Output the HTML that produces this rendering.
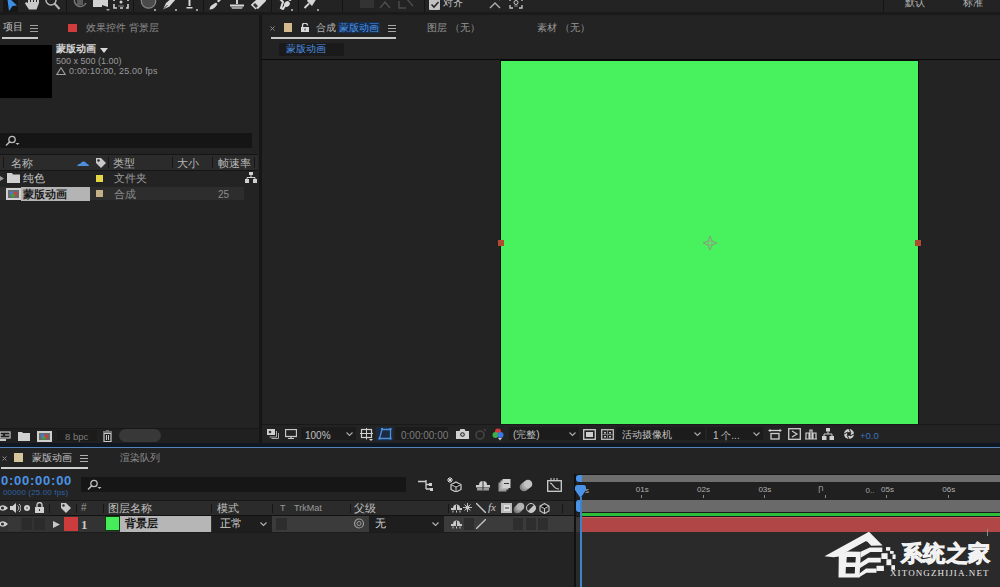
<!DOCTYPE html>
<html><head><meta charset="utf-8">
<style>
*{margin:0;padding:0;box-sizing:border-box}
html,body{width:1000px;height:587px;overflow:hidden;background:#232323;font-family:"Liberation Sans",sans-serif;color:#a8a8a8;font-size:10px}
.a{position:absolute}
.t{position:absolute;white-space:nowrap;line-height:1}
</style></head><body>
<!-- toolbar -->
<div class="a" style="left:0;top:0;width:1000px;height:13px;background:#232323"></div>
<div class="a" style="left:0;top:12px;width:1000px;height:3px;background:#1a1a1a"></div>


<!-- toolbar icons -->
<div class="a" style="left:3px;top:0;width:15px;height:12px;background:#171717"></div>
<svg class="a" style="left:6px;top:0" width="12" height="12"><path d="M1 -4L11 5.5 6.5 6 3 11z" fill="#3d8fe6"/></svg>
<svg class="a" style="left:25px;top:0" width="15" height="11"><path d="M3 -2v5L1 2 0 3.5 4 9.5h7.5L14 3V-2h-2v4h-1V-3H9v5H8V-3H6v5H5V-2z" fill="#c9c9c9"/></svg>
<svg class="a" style="left:45px;top:0" width="16" height="12"><circle cx="6" cy="0" r="5" fill="none" stroke="#b8b8b8" stroke-width="1.5"/><path d="M9.5 3.5L14.5 9" stroke="#b8b8b8" stroke-width="2"/></svg>
<div class="a" style="left:66px;top:0;width:1px;height:12px;background:#141414"></div>
<svg class="a" style="left:73px;top:0" width="15" height="10"><path d="M2 -2A6 6 0 0 0 13 3" fill="none" stroke="#777" stroke-width="1.5"/><rect x="4" y="0" width="6" height="5" fill="#5a5a5a"/></svg>
<svg class="a" style="left:92px;top:0" width="18" height="12"><rect x="1" y="-2" width="9" height="9" fill="#d2d2d2"/><path d="M10 0l6 -2v9l-6 -2z" fill="#d2d2d2"/><path d="M14 9h4l-2 2z" fill="#aaa"/></svg>
<svg class="a" style="left:113px;top:0" width="16" height="10"><path d="M1 -1v2M1 4v4h3M7 8h3M13 8h2V4M15 1v-2" stroke="#d0d0d0" stroke-width="1.6" fill="none"/><circle cx="8" cy="2" r="1.5" fill="#d0d0d0"/><path d="M5 6h6" stroke="#888"/></svg>
<div class="a" style="left:133px;top:0;width:1px;height:12px;background:#141414"></div>
<svg class="a" style="left:140px;top:0" width="17" height="12"><circle cx="8.5" cy="1" r="7.2" fill="#4a4a4a" stroke="#8a8a8a" stroke-width="1.2"/></svg>
<div class="a" style="left:154px;top:9px;width:2px;height:2px;background:#999"></div>
<svg class="a" style="left:162px;top:0" width="14" height="10"><path d="M14 -3L11 -3 4 3 1 9.5 7.5 6.5 13 0z" fill="#d6d6d6"/><path d="M1 9.5L5.5 5" stroke="#333" stroke-width="1"/><circle cx="11" cy="0" r="1.6" fill="#d6d6d6"/></svg>
<div class="a" style="left:175px;top:9px;width:2px;height:2px;background:#999"></div>
<svg class="a" style="left:185px;top:0" width="9" height="10"><path d="M3.5 -2h2v8h-2z" fill="#d6d6d6"/><path d="M1.5 7h6v1.5h-6z" fill="#d6d6d6"/></svg>
<div class="a" style="left:196px;top:9px;width:2px;height:2px;background:#999"></div>
<div class="a" style="left:203px;top:0;width:1px;height:12px;background:#141414"></div>
<svg class="a" style="left:209px;top:0" width="13" height="10"><path d="M12 -3L8 1l1.5 1.5L13 -1z" fill="#d6d6d6"/><path d="M7 2.5L3 5C1 6 1 8 0.5 9.5 3 9.5 6 8.5 8.5 4z" fill="#d6d6d6"/></svg>
<svg class="a" style="left:229px;top:0" width="16" height="10"><path d="M7 -2h2v6H7z" fill="#d0d0d0"/><path d="M1 4.5h14v2H1z" fill="#d8d8d8"/><path d="M2 6.5h12L13 9H3z" fill="#999"/></svg>
<svg class="a" style="left:250px;top:0" width="17" height="11"><path d="M1 5L8 -2 16 -2 16 1 8 9z" fill="#d8d8d8"/><path d="M1 5l3.5 -3.5 4.5 4.5L5.5 9.5z" fill="#d8d8d8"/><path d="M3 5l2 -2 3 3 -2 2z" fill="#333"/></svg>
<div class="a" style="left:271px;top:0;width:1px;height:12px;background:#141414"></div>
<svg class="a" style="left:277px;top:0" width="15" height="10"><path d="M2 -2l4 4 -2 6 2 1 3 -5" stroke="#dadada" stroke-width="2" fill="none"/><ellipse cx="10" cy="4" rx="3" ry="2.5" fill="#dadada" transform="rotate(-40 10 4)"/><circle cx="13" cy="-0.5" r="1.5" fill="#dadada"/></svg>
<div class="a" style="left:291px;top:9px;width:2px;height:2px;background:#999"></div>
<div class="a" style="left:298px;top:0;width:1px;height:12px;background:#141414"></div>
<svg class="a" style="left:303px;top:0" width="15" height="10"><path d="M6 -2L14 -2 9 6 4 1z" fill="#d6d6d6"/><path d="M6 3.5L1.5 8" stroke="#d6d6d6" stroke-width="1.8"/></svg>
<div class="a" style="left:317px;top:9px;width:2px;height:2px;background:#999"></div>
<div class="a" style="left:342px;top:0;width:1px;height:12px;background:#141414"></div>
<div class="a" style="left:360px;top:0;width:14px;height:8px;background:#333"></div>
<svg class="a" style="left:379px;top:0" width="36" height="10"><path d="M1 8l5 -6 5 6M20 1v7h7M27 -2l7 8" stroke="#4a4a4a" stroke-width="1.5" fill="none"/></svg>
<div class="a" style="left:424px;top:0;width:1px;height:12px;background:#141414"></div>
<div class="a" style="left:429px;top:-1px;width:11px;height:11px;background:#c2c2c2;border-radius:1px"></div>
<svg class="a" style="left:429px;top:0" width="11" height="10"><path d="M2.5 4.5l2.5 2.5 4.5 -5" stroke="#262626" stroke-width="1.6" fill="none"/></svg>
<div class="t" style="left:443px;top:-2px;font-size:10px;color:#c4c4c4">对齐</div>
<svg class="a" style="left:489px;top:0" width="12" height="10"><path d="M1 8l5 -5 5 5" stroke="#b0b0b0" stroke-width="1.4" fill="none"/><path d="M9 -1l2 1" stroke="#aaa"/></svg>
<svg class="a" style="left:509px;top:0" width="14" height="10"><path d="M1 -1v2M1 5v3h3M10 8h3V5M13 1v-2" stroke="#c8c8c8" stroke-width="1.3" fill="none"/><circle cx="7" cy="2.5" r="2" fill="none" stroke="#c8c8c8"/><path d="M5 6h4" stroke="#888"/></svg>
<div class="a" style="left:883px;top:0;width:1px;height:12px;background:#141414"></div>
<div class="t" style="left:905px;top:-2px;font-size:10px;color:#b4b4b4">默认</div>
<div class="t" style="left:963px;top:-2px;font-size:10px;color:#b4b4b4">标准</div>

<!-- project panel -->
<div class="a" style="left:0;top:15px;width:259px;height:428px;background:#232323"></div>
<div class="a" style="left:259px;top:15px;width:3px;height:432px;background:#161616"></div>
<div class="a" style="left:2px;top:37px;width:36px;height:2px;background:#c8c8c8"></div>
<div class="a" style="left:0;top:45px;width:52px;height:53px;background:#000"></div>
<div class="a" style="left:0;top:133px;width:252px;height:15px;background:#151515"></div>
<div class="a" style="left:0;top:154px;width:258px;height:1px;background:#151515"></div>
<div class="a" style="left:0;top:155px;width:258px;height:15px;background:#2b2b2b"></div>
<div class="a" style="left:0;top:170px;width:258px;height:1px;background:#151515"></div>
<div class="a" style="left:0;top:187px;width:244px;height:13px;background:#2d2d2d"></div>
<div class="a" style="left:21px;top:187px;width:69px;height:14px;background:#b4b4b4"></div>
<div class="a" style="left:0;top:428px;width:259px;height:1px;background:#181818"></div>
<div class="a" style="left:0;top:429px;width:259px;height:14px;background:#202020"></div>


<!-- project content -->
<div class="t" style="left:3px;top:22px;font-size:10px;color:#c4c4c4">项目</div>
<svg class="a" style="left:30px;top:25px" width="9" height="8"><path d="M0 .5h8M0 3.5h8M0 6.5h8" stroke="#a0a0a0" stroke-width="1"/></svg>
<div class="a" style="left:68px;top:24px;width:9px;height:8px;background:#d03c3c"></div>
<div class="t" style="left:86px;top:23px;font-size:10px;color:#8c8c8c">效果控件 背景层</div>
<div class="t" style="left:56px;top:44px;font-size:10px;font-weight:bold;color:#d4d4d4">蒙版动画</div><svg class="a" style="left:100px;top:48px" width="8" height="5"><path d="M0 0h8L4 5z" fill="#d8d8d8"/></svg>
<div class="t" style="left:56px;top:57px;font-size:9px;color:#9a9a9a">500 x 500 (1.00)</div>
<svg class="a" style="left:56px;top:67px" width="10" height="8"><path d="M5 .8L9.2 7.5H.8z" fill="none" stroke="#a0a0a0" stroke-width="1.1"/></svg><div class="t" style="left:69px;top:67px;font-size:9px;letter-spacing:0.2px;color:#9a9a9a">0:00:10:00, 25.00 fps</div>
<svg class="a" style="left:4px;top:135px" width="16" height="12"><circle cx="8" cy="4.5" r="3.2" fill="none" stroke="#bdbdbd" stroke-width="1.3"/><path d="M5.8 6.8L2 10.5" stroke="#bdbdbd" stroke-width="1.5"/><path d="M11.5 8h4l-2 2z" fill="#bdbdbd"/></svg>
<div class="a" style="left:3px;top:157px;width:1px;height:11px;background:#161616"></div>
<div class="t" style="left:11px;top:158px;font-size:10.5px;color:#b8b8b8">名称</div>
<svg class="a" style="left:77px;top:161px" width="12" height="5"><path d="M0 5Q1 2.5 3.5 2.5Q5 0 7 0.5Q9 1 9.5 2.5Q12 3 12 5z" fill="#4c8fdc"/></svg>
<svg class="a" style="left:95px;top:157px" width="12" height="12"><path d="M1 1h5l5 5-5 5-5-5z" fill="#c8c8c8"/><circle cx="3.5" cy="3.5" r="1.2" fill="#2b2b2b"/></svg>
<div class="a" style="left:108px;top:157px;width:1px;height:11px;background:#161616"></div>
<div class="t" style="left:113px;top:158px;font-size:10.5px;color:#b8b8b8">类型</div>
<div class="a" style="left:172px;top:157px;width:1px;height:11px;background:#161616"></div>
<div class="t" style="left:177px;top:158px;font-size:10.5px;color:#b8b8b8">大小</div>
<div class="a" style="left:212px;top:157px;width:1px;height:11px;background:#161616"></div>
<div class="t" style="left:218px;top:158px;font-size:10.5px;color:#b8b8b8">帧速率</div>
<div class="a" style="left:254px;top:157px;width:1px;height:11px;background:#161616"></div>
<svg class="a" style="left:0;top:176px" width="4" height="5"><path d="M0 0L4 2.5 0 5z" fill="#9a9a9a"/></svg>
<svg class="a" style="left:7px;top:173px" width="13" height="11"><path d="M0 0h5l1 1.5h7V10H0z" fill="#cfcfcf"/></svg>
<div class="t" style="left:23px;top:173px;font-size:10.5px;color:#c4c4c4">纯色</div>
<div class="a" style="left:96px;top:175px;width:7px;height:7px;background:#e4d646"></div>
<div class="t" style="left:114px;top:173px;font-size:10.5px;color:#9a9a9a">文件夹</div>
<svg class="a" style="left:245px;top:172px" width="12" height="11"><rect x="4" y="0" width="4" height="3" fill="#d0d0d0"/><path d="M6 3v2.5M2 8V5.5h8V8" stroke="#d0d0d0" fill="none"/><rect x="0" y="7" width="4" height="4" fill="#d0d0d0"/><rect x="8" y="7" width="4" height="4" fill="#d0d0d0"/></svg>
<svg class="a" style="left:6px;top:188px" width="15" height="12"><rect x="0" y="0" width="15" height="12" fill="#cfcfcf"/><rect x="2" y="2" width="11" height="8" fill="#6a6a6a"/><circle cx="6" cy="5.5" r="2.3" fill="#3f7fd0"/><circle cx="9" cy="6" r="2.3" fill="#c84040"/><circle cx="7" cy="7.5" r="2" fill="#40a040"/></svg>
<div class="t" style="left:23px;top:189px;font-size:10.5px;font-weight:bold;color:#1a1a1a">蒙版动画</div>
<div class="a" style="left:96px;top:190px;width:7px;height:7px;background:#c4b086"></div>
<div class="t" style="left:114px;top:189px;font-size:10.5px;color:#8c8c8c">合成</div>
<div class="t" style="left:218px;top:190px;font-size:10px;color:#8c8c8c">25</div>
<!-- project bottom toolbar -->
<svg class="a" style="left:0;top:431px" width="11" height="11"><rect x="0" y="1" width="10" height="6" fill="none" stroke="#c8c8c8" stroke-width="1.2"/><path d="M0 4h3M5 4h4" stroke="#c8c8c8"/><rect x="0" y="8" width="6" height="2" fill="#c8c8c8"/></svg>
<svg class="a" style="left:18px;top:432px" width="12" height="9"><path d="M0 0h4l1 1h7v8H0z" fill="#d0d0d0"/></svg>
<svg class="a" style="left:37px;top:431px" width="15" height="11"><rect x="0" y="0" width="15" height="11" fill="#cfcfcf"/><rect x="2" y="2" width="11" height="7" fill="#6a6a6a"/><circle cx="6" cy="5" r="2.2" fill="#3f7fd0"/><circle cx="9" cy="5.5" r="2.2" fill="#c84040"/><circle cx="7" cy="7" r="1.8" fill="#40a040"/></svg>
<div class="a" style="left:57px;top:430px;width:40px;height:11px;background:#1b1b1b"></div>
<div class="t" style="left:65px;top:432px;font-size:9.5px;color:#7e7e7e">8 bpc</div>
<svg class="a" style="left:103px;top:430px" width="9" height="12"><path d="M0 2h9M3 0h3" stroke="#c8c8c8" stroke-width="1.2"/><path d="M1 3.5h7v8H1z" fill="none" stroke="#c8c8c8" stroke-width="1.2"/><path d="M3.5 5v5M5.5 5v5" stroke="#c8c8c8"/></svg>
<div class="a" style="left:119px;top:429px;width:42px;height:13px;background:#383838;border-radius:7px"></div>

<!-- comp panel -->
<div class="a" style="left:262px;top:59px;width:738px;height:1px;background:#0a0a0a"></div>
<div class="a" style="left:279px;top:43px;width:65px;height:13px;background:#1a1a1a"></div>
<div class="a" style="left:271px;top:37px;width:125px;height:2px;background:#c8c8c8"></div>
<div class="a" style="left:500px;top:60px;width:419px;height:365px;background:#0a0a0a"></div>
<div class="a" style="left:501px;top:61px;width:417px;height:363px;background:#47f25e"></div>
<div class="a" style="left:262px;top:425px;width:738px;height:18px;background:#232323"></div>


<!-- comp tabs -->
<svg class="a" style="left:270px;top:26px" width="5" height="5"><path d="M.5 .5l4 4M4.5 .5l-4 4" stroke="#8a8a8a" stroke-width="1"/></svg>
<div class="a" style="left:284px;top:23px;width:8px;height:9px;background:#d4b88e"></div>
<svg class="a" style="left:301px;top:23px" width="8" height="9"><path d="M1.5 4V2.5a2.5 2.5 0 0 1 5 0" fill="none" stroke="#d8d8d8" stroke-width="1.3"/><rect x="0" y="4" width="8" height="5" fill="#d8d8d8"/><rect x="3.5" y="5.5" width="1" height="2" fill="#333"/></svg>
<div class="t" style="left:316px;top:23px;font-size:10px;color:#b4b4b4">合成</div>
<div class="a" style="left:338px;top:22px;width:42px;height:11px;background:#162c4a"></div>
<div class="t" style="left:339px;top:23px;font-size:10px;color:#4d95e8">蒙版动画</div>
<svg class="a" style="left:388px;top:25px" width="9" height="8"><path d="M0 .5h8M0 3.5h8M0 6.5h8" stroke="#a8a8a8" stroke-width="1"/></svg>
<div class="t" style="left:427px;top:23px;font-size:10px;color:#9a9a9a">图层 （无）</div>
<div class="t" style="left:537px;top:23px;font-size:10px;color:#9a9a9a">素材 （无）</div>
<div class="t" style="left:286px;top:44px;font-size:10px;color:#4a90e2">蒙版动画</div>
<!-- viewer -->
<div class="a" style="left:498px;top:240px;width:6px;height:6px;background:#b04a30"></div>
<div class="a" style="left:915px;top:240px;width:6px;height:6px;background:#b04a30"></div>
<svg class="a" style="left:702px;top:235px" width="16" height="16"><path d="M8 1L10 6 15 8 10 10 8 15 6 10 1 8 6 6z" fill="none" stroke="#8a9a78" stroke-width="1"/><circle cx="8" cy="8" r="2.2" fill="none" stroke="#9aa088" stroke-width="1"/></svg>
<!-- comp toolbar -->
<div class="a" style="left:262px;top:424px;width:738px;height:1px;background:#191919"></div>
<div class="a" style="left:301px;top:427px;width:55px;height:13px;background:#1c1c1c"></div>
<div class="a" style="left:395px;top:427px;width:53px;height:13px;background:#1c1c1c"></div>
<div class="a" style="left:509px;top:427px;width:70px;height:13px;background:#1c1c1c"></div>
<div class="a" style="left:616px;top:427px;width:89px;height:13px;background:#1c1c1c"></div>
<div class="a" style="left:707px;top:427px;width:56px;height:13px;background:#1c1c1c"></div>

<svg class="a" style="left:267px;top:429px" width="12" height="10"><rect x="0" y="0" width="8" height="6" fill="#cfcfcf"/><path d="M9.5 2v6h-7M11.5 4v5.5h-7" stroke="#a8a8a8" fill="none"/><circle cx="3" cy="3" r="1.3" fill="#333"/></svg>
<svg class="a" style="left:285px;top:429px" width="12" height="10"><rect x="0.5" y="0.5" width="11" height="7" fill="none" stroke="#c8c8c8" stroke-width="1.3"/><path d="M6 8v1.5M3 9.5h6" stroke="#c8c8c8" stroke-width="1.2"/></svg>
<div class="t" style="left:305px;top:431px;font-size:10px;color:#c0c0c0">100%</div>
<svg class="a" style="left:346px;top:432px" width="7" height="5"><path d="M.5 .5l3 3 3-3" stroke="#a8a8a8" stroke-width="1.2" fill="none"/></svg>
<svg class="a" style="left:360px;top:428px" width="14" height="13"><rect x="1.5" y="1.5" width="10" height="8" fill="none" stroke="#cfcfcf" stroke-width="1.2"/><path d="M6.5 0v11.5M0 5.5h13" stroke="#cfcfcf" stroke-width="1"/><path d="M9 11h4l-2 2z" fill="#cfcfcf"/></svg>
<div class="a" style="left:376px;top:427px;width:17px;height:14px;background:#1b2c42"></div>
<svg class="a" style="left:378px;top:428px" width="14" height="12"><path d="M4 1.5h8.5v9H1.5z" fill="none" stroke="#4a8ee0" stroke-width="1.3"/><rect x="3" y="0" width="2" height="2" fill="#4a8ee0"/><rect x="11.5" y="0" width="2" height="2" fill="#4a8ee0"/><rect x="0.5" y="9.5" width="2" height="2" fill="#4a8ee0"/><rect x="11.5" y="9.5" width="2" height="2" fill="#4a8ee0"/></svg>
<div class="t" style="left:401px;top:431px;font-size:10px;color:#7e7e7e">0:00:00:00</div>
<svg class="a" style="left:456px;top:429px" width="13" height="10"><path d="M0 2h3.5l1-2h4l1 2H13v8H0z" fill="#d0d0d0"/><circle cx="6.5" cy="5.5" r="2.3" fill="#2a2a2a"/><circle cx="6.5" cy="5.5" r="1.2" fill="#d0d0d0"/></svg>
<svg class="a" style="left:474px;top:429px" width="12" height="11"><circle cx="6" cy="6" r="4" fill="none" stroke="#444" stroke-width="1.6"/><path d="M10 0l2 2" stroke="#444" stroke-width="1.4"/></svg>
<svg class="a" style="left:492px;top:428px" width="12" height="13"><circle cx="6" cy="3.5" r="3" fill="#d63a3a"/><circle cx="3.5" cy="7" r="3" fill="#3bb04a"/><circle cx="8.5" cy="7" r="3" fill="#3a7ae0"/><path d="M6 10h4l-2 2.5z" fill="#d0d0d0"/></svg>
<div class="t" style="left:513px;top:430px;font-size:10px;color:#c0c0c0">(完整)</div>
<svg class="a" style="left:569px;top:432px" width="7" height="5"><path d="M.5 .5l3 3 3-3" stroke="#a8a8a8" stroke-width="1.2" fill="none"/></svg>
<svg class="a" style="left:583px;top:429px" width="13" height="11"><rect x="0.7" y="0.7" width="11.6" height="9.6" fill="none" stroke="#cfcfcf" stroke-width="1.3"/><rect x="3" y="3" width="7" height="5" fill="#cfcfcf"/></svg>
<svg class="a" style="left:601px;top:429px" width="13" height="11"><rect x="0.7" y="0.7" width="11.6" height="9.6" fill="none" stroke="#bfbfbf" stroke-width="1.3"/><path d="M6.5 1v9M1 5.5h11" stroke="#777"/><rect x="3" y="3" width="2" height="1.5" fill="#bfbfbf"/><rect x="8" y="3" width="2" height="1.5" fill="#bfbfbf"/><rect x="3" y="7" width="2" height="1.5" fill="#bfbfbf"/><rect x="8" y="7" width="2" height="1.5" fill="#bfbfbf"/></svg>
<div class="t" style="left:622px;top:430px;font-size:10px;color:#c0c0c0">活动摄像机</div>
<svg class="a" style="left:694px;top:432px" width="7" height="5"><path d="M.5 .5l3 3 3-3" stroke="#a8a8a8" stroke-width="1.2" fill="none"/></svg>
<div class="t" style="left:713px;top:431px;font-size:10px;color:#c0c0c0">1 个...</div>
<svg class="a" style="left:753px;top:432px" width="7" height="5"><path d="M.5 .5l3 3 3-3" stroke="#a8a8a8" stroke-width="1.2" fill="none"/></svg>
<svg class="a" style="left:768px;top:429px" width="14" height="11"><path d="M1 1.5h12" stroke="#cfcfcf" stroke-width="1.3"/><path d="M0 1.5l2.5-1.5v3zM14 1.5l-2.5-1.5v3z" fill="#cfcfcf"/><rect x="3" y="4.5" width="8" height="5.5" fill="none" stroke="#cfcfcf" stroke-width="1.3"/></svg>
<svg class="a" style="left:788px;top:428px" width="13" height="12"><rect x="0.7" y="0.7" width="11.6" height="10.6" fill="none" stroke="#cfcfcf" stroke-width="1.3"/><path d="M4 3l5 3-5 3" stroke="#cfcfcf" stroke-width="1.2" fill="none"/></svg>
<svg class="a" style="left:805px;top:428px" width="12" height="12"><path d="M0 11h12M1 11V5h3v6M5 11V2h2v9M8 11V5h3v6" stroke="#cfcfcf" stroke-width="1.2" fill="none"/></svg>
<svg class="a" style="left:822px;top:428px" width="12" height="12"><rect x="4" y="0" width="4" height="3.5" fill="#d0d0d0"/><path d="M6 3.5v2.5M2 8V6h8v2" stroke="#d0d0d0" fill="none"/><rect x="0" y="8" width="4.5" height="4" fill="#d0d0d0"/><rect x="7.5" y="8" width="4.5" height="4" fill="#d0d0d0"/></svg>
<svg class="a" style="left:843px;top:428px" width="12" height="12"><circle cx="6" cy="6" r="5" fill="#cfcfcf"/><circle cx="6" cy="6" r="2" fill="#232323"/><path d="M6 1l2 4M11 6l-4 2M6 11l-2-4M1 6l4-2" stroke="#232323" stroke-width="1"/></svg>
<div class="t" style="left:860px;top:431px;font-size:9.5px;color:#3a74bc">+0.0</div>

<!-- separator band -->
<div class="a" style="left:0;top:443px;width:1000px;height:4px;background:#0f1822"></div>
<div class="a" style="left:0;top:447px;width:1000px;height:1px;background:#5584b8"></div>

<!-- timeline -->
<svg class="a" style="left:2px;top:456px" width="5" height="5"><path d="M.5 .5l4 4M4.5 .5l-4 4" stroke="#8a8a8a" stroke-width="1"/></svg>
<div class="a" style="left:14px;top:453px;width:9px;height:9px;background:#d6c49a"></div>
<div class="t" style="left:32px;top:453px;font-size:10px;color:#c4c4c4">蒙版动画</div>
<svg class="a" style="left:80px;top:455px" width="9" height="8"><path d="M0 .5h8M0 3.5h8M0 6.5h8" stroke="#b0b0b0" stroke-width="1"/></svg>
<div class="a" style="left:1px;top:467px;width:87px;height:2px;background:#cfcfcf"></div>
<div class="t" style="left:120px;top:453px;font-size:10px;color:#8e8e8e">渲染队列</div>
<div class="t" style="left:1px;top:474px;font-size:13px;font-weight:bold;letter-spacing:0.75px;color:#4b93e6">0:00:00:00</div>
<div class="t" style="left:3px;top:489px;font-size:8px;letter-spacing:0.15px;color:#2f62a6">00000 (25.00 fps)</div>
<div class="a" style="left:81px;top:477px;width:325px;height:15px;background:#161616"></div>
<svg class="a" style="left:86px;top:479px" width="16" height="12"><circle cx="8" cy="4.5" r="3.2" fill="none" stroke="#bdbdbd" stroke-width="1.3"/><path d="M5.8 6.8L2 10.5" stroke="#bdbdbd" stroke-width="1.5"/><path d="M11.5 8h4l-2 2z" fill="#bdbdbd"/></svg>
<svg class="a" style="left:418px;top:480px" width="16" height="11"><path d="M0 1.5h6M6 1.5h2M8 0v9M8 4.5h4M8 9h4" stroke="#cfcfcf" stroke-width="1.3" fill="none"/><rect x="11" y="3" width="3" height="3" fill="#cfcfcf"/><rect x="12" y="8" width="3" height="3" fill="#cfcfcf"/></svg>
<svg class="a" style="left:447px;top:477px" width="15" height="15"><path d="M3 0v6M0 3h6M1 1l4 4M5 1l-4 4" stroke="#e0e0e0" stroke-width="1"/><path d="M9 5l5 2.5v5L9 15 4 12.5v-5z" fill="none" stroke="#cfcfcf" stroke-width="1.2"/><path d="M4 7.5l5 2.5 5-2.5M9 10v5" stroke="#cfcfcf" stroke-width="1"/></svg>
<svg class="a" style="left:476px;top:480px" width="14" height="11"><path d="M3 5a4 4 0 0 1 8 0z" fill="#cfcfcf"/><rect x="0" y="5" width="14" height="2.5" fill="#cfcfcf"/><rect x="1" y="8" width="12" height="2.5" fill="#9a9a9a"/><path d="M7 1v9" stroke="#333"/></svg>
<svg class="a" style="left:498px;top:479px" width="13" height="13"><rect x="0.5" y="3.5" width="8" height="9" fill="#9a9a9a"/><rect x="2.5" y="1.5" width="8" height="9" fill="#b8b8b8"/><rect x="4.5" y="0" width="8" height="9" fill="#d0d0d0"/><path d="M6 4.5h5" stroke="#333"/></svg>
<svg class="a" style="left:519px;top:479px" width="14" height="13"><circle cx="5" cy="8" r="4.3" fill="#8a8a8a"/><circle cx="7" cy="6.5" r="4.3" fill="#a8a8a8"/><circle cx="9" cy="5" r="4.3" fill="#c4c4c4"/></svg>
<svg class="a" style="left:547px;top:478px" width="15" height="14"><rect x="0.7" y="2.7" width="13.6" height="10.6" fill="none" stroke="#cfcfcf" stroke-width="1.3"/><path d="M3 5c3 0 3 6 9 6" stroke="#cfcfcf" stroke-width="1.2" fill="none"/><path d="M4 0v2M7 0v2M10 0v2" stroke="#cfcfcf"/></svg>
<!-- header row -->
<div class="a" style="left:0;top:500px;width:574px;height:1px;background:#181818"></div>
<div class="a" style="left:0;top:501px;width:574px;height:14px;background:#2b2b2b"></div>
<div class="a" style="left:0;top:515px;width:574px;height:1px;background:#121212"></div>
<svg class="a" style="left:0;top:504px" width="8" height="8"><path d="M-2 4Q3 -1.5 8 4Q3 9.5 -2 4z" fill="#d0d0d0"/><circle cx="2.5" cy="4" r="1.6" fill="#2b2b2b"/></svg>
<svg class="a" style="left:10px;top:503px" width="11" height="10"><path d="M0 3h2.5L6 0v10L2.5 7H0z" fill="#d0d0d0"/><path d="M7.5 2.5a3 3 0 0 1 0 5M9 1a5 5 0 0 1 0 8" stroke="#c8c8c8" fill="none"/></svg>
<div class="a" style="left:24px;top:505px;width:6px;height:6px;border-radius:3px;background:#d0d0d0"></div><div class="a" style="left:26px;top:507px;width:2px;height:2px;background:#888"></div>
<svg class="a" style="left:35px;top:502px" width="9" height="11"><path d="M2 5V3a2.5 2.5 0 0 1 5 0v2" fill="none" stroke="#d0d0d0" stroke-width="1.3"/><rect x="0" y="5" width="9" height="6" fill="#d0d0d0"/><rect x="4" y="7" width="1" height="2" fill="#333"/></svg>
<div class="a" style="left:49px;top:504px;width:1px;height:9px;background:#161616"></div>
<svg class="a" style="left:60px;top:502px" width="12" height="12"><path d="M1 1h5l5 5-5 5-5-5z" fill="#c8c8c8"/><circle cx="3.5" cy="3.5" r="1.2" fill="#2b2b2b"/></svg>
<div class="a" style="left:76px;top:504px;width:1px;height:9px;background:#161616"></div>
<div class="t" style="left:81px;top:503px;font-size:10px;color:#9a9a9a">#</div>
<div class="a" style="left:103px;top:504px;width:1px;height:9px;background:#161616"></div>
<div class="t" style="left:108px;top:503px;font-size:10.5px;color:#c0c0c0">图层名称</div>
<div class="a" style="left:211px;top:504px;width:1px;height:9px;background:#161616"></div>
<div class="t" style="left:217px;top:503px;font-size:10.5px;color:#c0c0c0">模式</div>
<div class="a" style="left:272px;top:504px;width:1px;height:9px;background:#161616"></div>
<div class="t" style="left:280px;top:504px;font-size:9px;color:#9a9a9a">T</div>
<div class="t" style="left:294px;top:504px;font-size:9px;color:#9a9a9a">TrkMat</div>
<div class="a" style="left:350px;top:504px;width:1px;height:9px;background:#161616"></div>
<div class="t" style="left:354px;top:503px;font-size:10.5px;color:#c0c0c0">父级</div>
<div class="a" style="left:448px;top:504px;width:1px;height:9px;background:#161616"></div>
<svg class="a" style="left:451px;top:503px" width="11" height="10"><path d="M2 5a3.5 3.5 0 0 1 7 0z" fill="#c8c8c8"/><rect x="0" y="5" width="11" height="2" fill="#c8c8c8"/><path d="M2 7.5v2M5.5 7.5v2M9 7.5v2" stroke="#c8c8c8"/><path d="M5.5 2v5" stroke="#2b2b2b"/></svg>
<svg class="a" style="left:463px;top:503px" width="9" height="9"><circle cx="4.5" cy="4.5" r="2" fill="#c8c8c8"/><path d="M4.5 0v9M0 4.5h9M1.5 1.5l6 6M7.5 1.5l-6 6" stroke="#c8c8c8" stroke-width=".9"/></svg>
<svg class="a" style="left:476px;top:503px" width="10" height="10"><path d="M0 0l10 10" stroke="#c8c8c8" stroke-width="1.4"/></svg>
<div class="t" style="left:488px;top:502px;font-size:11px;font-style:italic;font-family:'Liberation Serif',serif;color:#c8c8c8">fx</div>
<svg class="a" style="left:501px;top:503px" width="11" height="10"><rect x="0" y="0" width="11" height="10" fill="#bdbdbd"/><rect x="3" y="2" width="6" height="6" fill="#ddd"/><path d="M4 5h4" stroke="#333"/></svg>
<svg class="a" style="left:513px;top:502px" width="12" height="12"><circle cx="4.5" cy="7.5" r="3.8" fill="#7a7a7a"/><circle cx="6" cy="6" r="3.8" fill="#9a9a9a"/><circle cx="7.5" cy="4.5" r="3.8" fill="#b4b4b4"/></svg>
<svg class="a" style="left:526px;top:503px" width="10" height="10"><circle cx="5" cy="5" r="4.5" fill="#c8c8c8"/><path d="M1.8 8.2A4.5 4.5 0 0 1 8.2 1.8z" fill="#2b2b2b"/><circle cx="5" cy="5" r="4.5" fill="none" stroke="#c8c8c8"/></svg>
<svg class="a" style="left:539px;top:503px" width="11" height="11"><path d="M5.5 .5l4.5 2.5v5l-4.5 2.5L1 8V3z" fill="none" stroke="#c8c8c8" stroke-width="1.1"/><path d="M1 3l4.5 2.5L10 3M5.5 5.5v5" stroke="#c8c8c8"/></svg>
<div class="a" style="left:562px;top:504px;width:1px;height:9px;background:#161616"></div>
<!-- layer row -->
<div class="a" style="left:0;top:516px;width:574px;height:16px;background:#333"></div>
<svg class="a" style="left:0;top:520px" width="8" height="8"><path d="M-2 4Q3 -1.5 8 4Q3 9.5 -2 4z" fill="#d0d0d0"/><circle cx="2.5" cy="4" r="1.6" fill="#333"/></svg>
<div class="a" style="left:8px;top:517px;width:12px;height:14px;background:#373737"></div>
<div class="a" style="left:22px;top:518px;width:10px;height:12px;background:#2b2b2b"></div>
<div class="a" style="left:34px;top:518px;width:11px;height:12px;background:#2b2b2b"></div>
<svg class="a" style="left:53px;top:521px" width="7" height="7"><path d="M0 0L7 3.5 0 7z" fill="#c8c8c8"/></svg>
<div class="a" style="left:64px;top:517px;width:14px;height:14px;background:#cc3c3c"></div>
<div class="t" style="left:81px;top:518px;font-size:13px;font-weight:bold;font-family:'Liberation Serif',serif;color:#c8c8c8">1</div>
<div class="a" style="left:105px;top:516px;width:15px;height:15px;background:#0e3a12"></div>
<div class="a" style="left:106px;top:517px;width:13px;height:13px;background:#47ec5a"></div>
<div class="a" style="left:120px;top:516px;width:91px;height:16px;background:#b6b6b6"></div>
<div class="t" style="left:125px;top:518px;font-size:11px;font-weight:bold;color:#141414">背景层</div>
<div class="a" style="left:212px;top:516px;width:60px;height:16px;background:#1e1e1e"></div>
<div class="t" style="left:220px;top:518px;font-size:10.5px;color:#d0d0d0">正常</div>
<svg class="a" style="left:260px;top:522px" width="7" height="5"><path d="M.5 .5l3 3 3-3" stroke="#b0b0b0" stroke-width="1.2" fill="none"/></svg>
<div class="a" style="left:272px;top:516px;width:97px;height:16px;background:#3b3b3b"></div>
<div class="a" style="left:276px;top:518px;width:11px;height:12px;background:#2d2d2d"></div>
<svg class="a" style="left:353px;top:518px" width="12" height="11"><circle cx="6" cy="5.5" r="4.5" fill="none" stroke="#9a9a9a" stroke-width="1.2"/><path d="M6 5.5m-2 0a2 2 0 1 0 4 0a2 2 0 1 0 -4 0" fill="none" stroke="#9a9a9a"/></svg>
<div class="a" style="left:369px;top:516px;width:75px;height:16px;background:#1e1e1e"></div>
<div class="t" style="left:375px;top:518px;font-size:10.5px;color:#d0d0d0">无</div>
<svg class="a" style="left:432px;top:522px" width="7" height="5"><path d="M.5 .5l3 3 3-3" stroke="#b0b0b0" stroke-width="1.2" fill="none"/></svg>
<div class="a" style="left:444px;top:516px;width:130px;height:16px;background:#3b3b3b"></div>
<svg class="a" style="left:451px;top:519px" width="11" height="10"><path d="M2 5a3.5 3.5 0 0 1 7 0z" fill="#c8c8c8"/><rect x="0" y="5" width="11" height="2" fill="#c8c8c8"/><path d="M2 7.5v2M5.5 7.5v2M9 7.5v2" stroke="#c8c8c8"/><path d="M5.5 2v5" stroke="#3b3b3b"/></svg>
<div class="a" style="left:464px;top:518px;width:10px;height:12px;background:#2e2e2e"></div>
<svg class="a" style="left:476px;top:519px" width="10" height="10"><path d="M0 10L10 0" stroke="#c8c8c8" stroke-width="1.3"/></svg>
<div class="a" style="left:513px;top:518px;width:10px;height:12px;background:#2e2e2e"></div>
<div class="a" style="left:526px;top:518px;width:10px;height:12px;background:#2e2e2e"></div>
<div class="a" style="left:538px;top:518px;width:10px;height:12px;background:#2e2e2e"></div>
<div class="a" style="left:0;top:532px;width:574px;height:1px;background:#1c1c1c"></div>
<!-- timeline right -->
<div class="a" style="left:576px;top:532px;width:424px;height:55px;background:#2a2a2a"></div>
<div class="a" style="left:574px;top:474px;width:2px;height:113px;background:#111"></div>
<div class="a" style="left:576px;top:474px;width:424px;height:1px;background:#151515"></div>
<div class="a" style="left:581px;top:475px;width:419px;height:7px;background:#6e6e6e"></div>
<div class="a" style="left:576px;top:475px;width:6px;height:7px;background:#4b93e6;border-radius:3px 0 0 3px"></div>
<div class="a" style="left:576px;top:482px;width:424px;height:18px;background:#202020"></div>
<div class="a" style="left:581px;top:500px;width:419px;height:12px;background:#6a6a6a"></div>
<div class="a" style="left:576px;top:500px;width:6px;height:12px;background:#4b93e6;border-radius:3px 0 0 3px"></div>
<div class="a" style="left:576px;top:512px;width:424px;height:1px;background:#1a1a1a"></div>
<div class="a" style="left:581px;top:513px;width:419px;height:3px;background:#2dbb3a"></div>
<div class="a" style="left:576px;top:516px;width:424px;height:1px;background:#1a1a1a"></div>
<div class="a" style="left:576px;top:517px;width:5px;height:15px;background:#3a3a3a"></div>
<div class="a" style="left:581px;top:517px;width:419px;height:15px;background:#b04646"></div>
<div class="a" style="left:581px;top:517px;width:419px;height:1px;background:#c46060"></div>
<div class="t" style="left:585px;top:487px;font-size:8px;color:#b0b0b0">s</div>
<div class="a" style="left:580px;top:495px;width:1px;height:3px;background:#888"></div>
<div class="t" style="left:635.8px;top:486px;font-size:8px;color:#b0b0b0">01s</div>
<div class="a" style="left:641px;top:495px;width:1px;height:3px;background:#888"></div>
<div class="t" style="left:697.1px;top:486px;font-size:8px;color:#b0b0b0">02s</div>
<div class="a" style="left:703px;top:495px;width:1px;height:3px;background:#888"></div>
<div class="t" style="left:758.4px;top:486px;font-size:8px;color:#b0b0b0">03s</div>
<div class="a" style="left:764px;top:495px;width:1px;height:3px;background:#888"></div>
<div class="a" style="left:825px;top:495px;width:1px;height:3px;background:#888"></div>
<div class="t" style="left:881.0px;top:486px;font-size:8px;color:#b0b0b0">05s</div>
<div class="a" style="left:886px;top:495px;width:1px;height:3px;background:#888"></div>
<div class="t" style="left:942.3px;top:486px;font-size:8px;color:#b0b0b0">06s</div>
<div class="a" style="left:948px;top:495px;width:1px;height:3px;background:#888"></div>
<div class="t" style="left:818px;top:484px;font-size:9px;color:#9a9a9a">ր</div>
<div class="t" style="left:865.5px;top:487px;font-size:8px;color:#a0a0a0">0..</div>
<svg class="a" style="left:574px;top:485px" width="13" height="14"><path d="M1 2.5Q1 0 3.5 0h6Q12 0 12 2.5V5L6.5 13 1 5z" fill="#4b93e6"/></svg>
<div class="a" style="left:580px;top:497px;width:2px;height:90px;background:#3f82cc"></div>
<!-- watermark -->
<div class="a" style="left:987px;top:529px;width:1px;height:7px;background:#8a8a8a"></div>
<svg class="a" style="left:820px;top:528px" width="80" height="55" viewBox="0 0 80 55">
<g fill="#f2f2f2">
<polygon points="4.5,28.2 49,3.8 62.6,17.6 51.2,17.8 47.2,13.5 45.6,13.3 27.2,23.4 19,28.4 13.5,29.3"/>
<polygon points="17.9,27.4 27.2,23.4 40.5,23.8 40.6,29.8 39.5,49.5 18.5,49.5 18.8,28.3"/>
<polygon points="40.5,23.8 49.8,19.4 62.3,19.4 62.3,24 50.4,24 40.6,29.8"/>
<polygon points="39.8,35.2 48,29.8 60.8,29.8 60.8,34.4 49,34.4 39.6,40.2"/>
<polygon points="39.5,45.6 46,40.5 56.5,40.5 56.5,44.8 46.5,44.8 38.7,49.5"/>
<rect x="66" y="19.1" width="4.3" height="3.6"/>
<rect x="70" y="23" width="3.7" height="2.8"/>
<rect x="61.4" y="25.2" width="6.2" height="5.8"/>
<rect x="72.5" y="26.4" width="3.1" height="4.6"/>
<rect x="66.4" y="31.3" width="4.9" height="5.9"/>
<rect x="56.5" y="37.8" width="7.4" height="5.2"/>
<rect x="71.3" y="37.2" width="3.7" height="4.6"/>
</g>
<g fill="#262626">
<polygon points="26.8,28.9 35.8,28.9 35.5,34.6 26.4,34.6"/>
<polygon points="25.9,39 35,39 34.8,45.6 25.6,45.6"/>
</g>
</svg>
<div class="t" style="left:901px;top:543px;font-size:22px;font-weight:bold;letter-spacing:0.3px;color:#f2f2f2;-webkit-text-stroke:1px #f2f2f2">系统之家</div>
<div class="t" style="left:890px;top:569px;font-size:9px;font-family:'Liberation Serif',serif;color:#e8e8e8;letter-spacing:1.1px">XITONGZHIJIA.NET</div>
</body></html>
